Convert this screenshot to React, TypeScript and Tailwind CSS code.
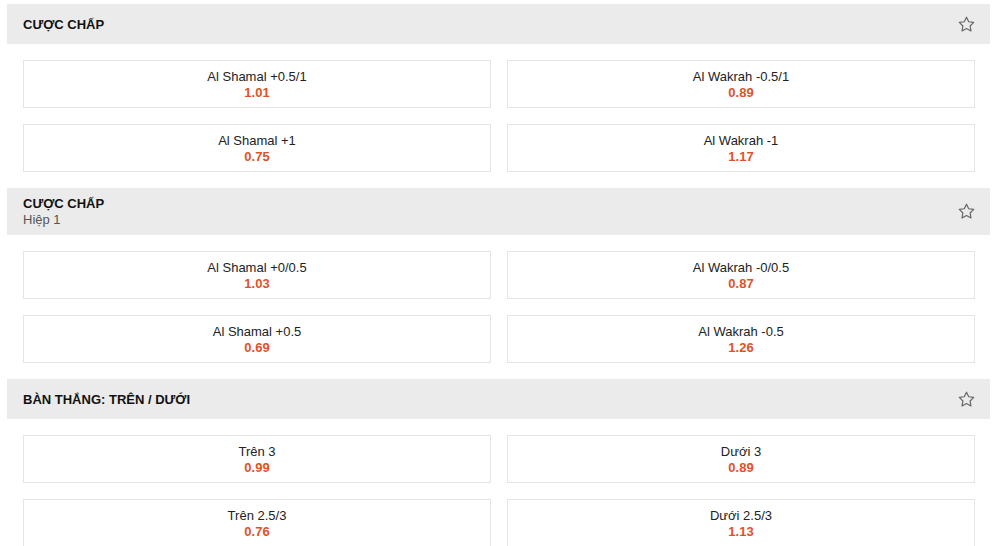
import React from "react";

type Odd = { label: string; price: string };

const sections: { title: string; sub?: string; rows: [Odd, Odd][] }[] = [
  {
    title: "CƯỢC CHẤP",
    rows: [
      [
        { label: "Al Shamal +0.5/1", price: "1.01" },
        { label: "Al Wakrah -0.5/1", price: "0.89" },
      ],
      [
        { label: "Al Shamal +1", price: "0.75" },
        { label: "Al Wakrah -1", price: "1.17" },
      ],
    ],
  },
  {
    title: "CƯỢC CHẤP",
    sub: "Hiệp 1",
    rows: [
      [
        { label: "Al Shamal +0/0.5", price: "1.03" },
        { label: "Al Wakrah -0/0.5", price: "0.87" },
      ],
      [
        { label: "Al Shamal +0.5", price: "0.69" },
        { label: "Al Wakrah -0.5", price: "1.26" },
      ],
    ],
  },
  {
    title: "BÀN THẮNG: TRÊN / DƯỚI",
    rows: [
      [
        { label: "Trên 3", price: "0.99" },
        { label: "Dưới 3", price: "0.89" },
      ],
      [
        { label: "Trên 2.5/3", price: "0.76" },
        { label: "Dưới 2.5/3", price: "1.13" },
      ],
    ],
  },
];

const StarIcon = () => (
  <svg
    width="19"
    height="19"
    viewBox="0 0 24 24"
    fill="none"
    stroke="#666"
    strokeWidth={1.5}
    strokeLinejoin="round"
    strokeLinecap="round"
  >
    <path d="M12 2.8l2.8 5.7 6.3.9-4.55 4.45 1.07 6.27L12 17.15l-5.62 2.97 1.07-6.27L2.9 9.4l6.3-.9z" />
  </svg>
);

const OddCard = ({ odd }: { odd: Odd }) => (
  <div className="flex-1 h-[48px] pt-[2px] border border-[#e5e5e5] bg-white flex flex-col items-center justify-center leading-[16px]">
    <span className="text-[13px] text-[#222]">{odd.label}</span>
    <span className="text-[13px] font-bold text-[#df5228]">{odd.price}</span>
  </div>
);

const App = () => {
  return (
    <div
      className="bg-white min-h-[546px] pl-[7px] pr-[11px] pt-[4px]"
      style={{ fontFamily: '"Liberation Sans", Arial, sans-serif' }}
    >
      {sections.map((section, i) => (
        <div key={i} className="mb-4">
          {/* section header */}
          <div
            className={`bg-[#ebebeb] flex items-center justify-between pl-4 pr-[14px] ${
              section.sub ? "h-[47px]" : "h-[40px] pt-[1px]"
            }`}
          >
            <div className="flex flex-col leading-[16px]">
              <span className="text-[13px] font-bold text-[#111]">
                {section.title}
              </span>
              {section.sub && (
                <span className="text-[13px] text-[#555]">{section.sub}</span>
              )}
            </div>
            <StarIcon />
          </div>
          <div className="pl-4 pr-[15px] pt-4 flex flex-col gap-4">
            {section.rows.map((row, j) => (
              <div key={j} className="flex gap-4">
                <OddCard odd={row[0]} />
                <OddCard odd={row[1]} />
              </div>
            ))}
          </div>
        </div>
      ))}
    </div>
  );
};

export default App;
